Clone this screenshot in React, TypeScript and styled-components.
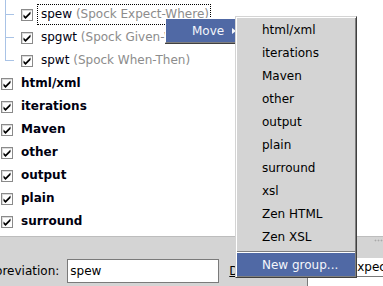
import React from 'react';
import styled, { createGlobalStyle } from 'styled-components';

const GlobalStyle = createGlobalStyle`
  html, body {
    margin: 0;
    padding: 0;
    width: 383px;
    height: 286px;
    overflow: hidden;
    background: #d4d4d4;
  }
  body {
    font-family: "DejaVu Sans", Verdana, sans-serif;
    font-size: 12px;
    color: #000;
  }
`;

const Screen = styled.div`
  position: relative;
  width: 383px;
  height: 286px;
  overflow: hidden;
  display: flex;
  flex-direction: column;
  background: #d4d4d4;
`;

const TreePanel = styled.div`
  flex: none;
  height: 237px;
  box-sizing: border-box;
  padding-top: 3px;
  background: #fff;
  border-bottom: 1px solid #bdbdbd;
`;

const Row = styled.div<{ $child?: boolean }>`
  height: 23px;
  display: flex;
  align-items: center;
  padding-left: ${(p) => (p.$child ? 0 : 1)}px;
`;

const LINE = '#a9c3e6';

const Guide = styled.span<{ $first?: boolean; $last?: boolean }>`
  position: relative;
  flex: none;
  align-self: stretch;
  width: 21px;
  &::before {
    content: '';
    position: absolute;
    left: 5px;
    width: 1px;
    top: ${(p) => (p.$first ? -3 : 0)}px;
    bottom: ${(p) => (p.$last ? 11 : 0)}px;
    background: ${LINE};
  }
  &::after {
    content: '';
    position: absolute;
    left: 5px;
    top: 11px;
    width: 9px;
    height: 1px;
    background: ${LINE};
  }
`;

const Box = styled.span`
  flex: none;
  width: 12px;
  height: 12px;
  box-sizing: border-box;
  border: 1px solid #8a8a8a;
  background: #fff;
  box-shadow: inset 1px 1px 0 #dcdcdc;
  display: flex;
  align-items: center;
  justify-content: center;
  svg {
    display: block;
  }
`;

const Label = styled.span<{ $focus?: boolean; $bold?: boolean }>`
  margin-left: 4px;
  padding: 0 1px 0 3px;
  border: 1px dotted ${(p) => (p.$focus ? '#000' : 'transparent')};
  line-height: 19px;
  white-space: nowrap;
  font-weight: ${(p) => (p.$bold ? 'bold' : 'normal')};
  color: #000010;
`;

const Hint = styled.span`
  color: #8c8c8c;
`;

const Splitter = styled.div`
  flex: none;
  height: 6px;
  display: flex;
  justify-content: flex-end;
  align-items: center;
`;

const Grip = styled.span`
  width: 9px;
  height: 3px;
  background-image: radial-gradient(circle, #a9a9a9 0.8px, transparent 1.1px);
  background-size: 3px 3px;
`;

const FormRow = styled.div`
  flex: none;
  display: flex;
  align-items: center;
  height: 24px;
  margin-top: 16px;
  margin-left: -21px;
`;

const FieldLabel = styled.span<{ $gap?: number }>`
  flex: none;
  white-space: nowrap;
  margin-left: ${(p) => p.$gap ?? 0}px;
  u {
    text-decoration: underline;
  }
`;

const TextField = styled.div`
  flex: none;
  margin-left: 8px;
  width: 152px;
  height: 24px;
  box-sizing: border-box;
  border: 1px solid #7a7a7a;
  background: #fff;
  padding-left: 2px;
  line-height: 22px;
  white-space: nowrap;
`;

const DescField = styled.div`
  flex: none;
  align-self: flex-start;
  margin-top: -1px;
  margin-left: 5px;
  width: 100px;
  height: 40px;
  box-sizing: border-box;
  background: #fff;
  border-left: 1px solid #7a7a7a;
`;

const DescText = styled.div`
  height: 18px;
  line-height: 18px;
  padding-left: 2px;
  border-bottom: 1px solid #7a7a7a;
  white-space: nowrap;
`;

const HIGHLIGHT = '#5069a5';

const MovePopup = styled.div`
  position: absolute;
  left: 165px;
  top: 18px;
  width: 73px;
  box-sizing: border-box;
  border-top: 1px solid #fff;
  border-left: 1px solid #fff;
  border-right: 1px solid #404040;
  border-bottom: 1px solid #808080;
  box-shadow: 0 1px 0 #404040;
  background: #d4d4d4;
  z-index: 1;
`;

const MenuItem = styled.div<{ $active?: boolean; $indent: number }>`
  height: 23px;
  display: flex;
  align-items: center;
  padding-left: ${(p) => p.$indent}px;
  background: ${(p) => (p.$active ? HIGHLIGHT : 'transparent')};
  color: ${(p) => (p.$active ? '#f4f6fb' : '#000')};
  white-space: nowrap;
`;

const Arrow = styled.span`
  margin-left: auto;
  margin-right: 1px;
  width: 0;
  height: 0;
  border-left: 4px solid #f4f6fb;
  border-top: 3px solid transparent;
  border-bottom: 3px solid transparent;
`;

const SubMenu = styled.div`
  position: absolute;
  left: 235px;
  top: 16px;
  width: 122px;
  box-sizing: border-box;
  padding: 1px;
  background: #d4d4d4;
  border: 1px solid;
  border-color: #d4d4d4 #404040 #404040 #d4d4d4;
  box-shadow: inset 1px 1px 0 #fff, inset -1px -1px 0 #808080;
  z-index: 2;
`;

const Separator = styled.div`
  padding-top: 3px;
  &::after {
    content: '';
    display: block;
    border-top: 1px solid #808080;
    border-bottom: 1px solid #fff;
  }
`;

const Tick = () => (
  <svg width="10" height="10" viewBox="0 0 10 10">
    <polygon points="1.5,4.5 3.5,6.5 8.5,1.5 8.5,4 3.5,9 1.5,7" fill="#000" />
  </svg>
);

const children = [
  { name: 'spew', hint: '(Spock Expect-Where)', focus: true },
  { name: 'spgwt', hint: '(Spock Given-When-Then)' },
  { name: 'spwt', hint: '(Spock When-Then)' },
];

const groups = ['html/xml', 'iterations', 'Maven', 'other', 'output', 'plain', 'surround'];

const targets = [
  'html/xml',
  'iterations',
  'Maven',
  'other',
  'output',
  'plain',
  'surround',
  'xsl',
  'Zen HTML',
  'Zen XSL',
];

export default function App() {
  return (
    <>
      <GlobalStyle />
      <Screen>
        <TreePanel>
          {children.map((c, i) => (
            <Row key={c.name} $child>
              <Guide $first={i === 0} $last={i === children.length - 1} />
              <Box>
                <Tick />
              </Box>
              <Label $focus={c.focus}>
                {c.name} <Hint>{c.hint}</Hint>
              </Label>
            </Row>
          ))}
          {groups.map((g) => (
            <Row key={g}>
              <Box>
                <Tick />
              </Box>
              <Label $bold>{g}</Label>
            </Row>
          ))}
        </TreePanel>
        <Splitter>
          <Grip />
        </Splitter>
        <FormRow>
          <FieldLabel>Abbreviation:</FieldLabel>
          <TextField>spew</TextField>
          <FieldLabel $gap={10}>
            <u>D</u>escription:
          </FieldLabel>
          <DescField>
            <DescText>Spock Expect-Where</DescText>
          </DescField>
        </FormRow>

        <MovePopup>
          <MenuItem $active $indent={26}>
            Move
            <Arrow />
          </MenuItem>
        </MovePopup>

        <SubMenu>
          {targets.map((t) => (
            <MenuItem key={t} $indent={25}>
              {t}
            </MenuItem>
          ))}
          <Separator />
          <MenuItem $active $indent={25}>
            New group...
          </MenuItem>
        </SubMenu>
      </Screen>
    </>
  );
}
